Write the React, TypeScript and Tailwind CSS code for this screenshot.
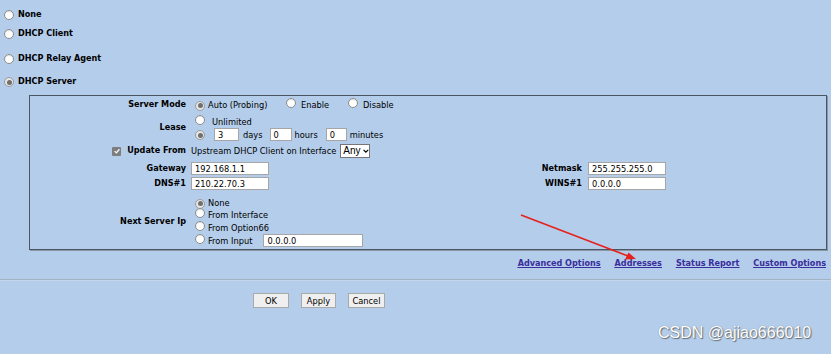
import React from "react";

const FONT = "'DejaVu Sans Condensed', 'DejaVu Sans', sans-serif";

function Radio({ checked = false }: { checked?: boolean }) {
  return (
    <span
      className={
        "inline-flex shrink-0 items-center justify-center w-[10px] h-[10px] rounded-full border " +
        (checked
          ? "border-[#9a9a9a] bg-[#e6e6e6]"
          : "border-[#8c8c8c] bg-white shadow-[inset_0_1px_1px_rgba(0,0,0,0.12)]")
      }
    >
      {checked && <span className="block w-[5px] h-[5px] rounded-full bg-[#6f6f6f]" />}
    </span>
  );
}

function Input({ value, w, h = 13 }: { value: string; w: number; h?: number }) {
  return (
    <span
      className="inline-flex items-center shrink-0 bg-white border border-[#a6a6a6] pl-[3px] text-[9.2px] text-black leading-none"
      style={{ width: w, height: h }}
    >
      {value}
    </span>
  );
}

function Label({ children }: { children: React.ReactNode }) {
  return (
    <div className="w-[156px] shrink-0 flex justify-end items-center font-bold text-[9px] text-black">
      {children}
    </div>
  );
}

function TopOption({ label, checked, mt }: { label: string; checked?: boolean; mt: string }) {
  return (
    <div className={"flex items-center h-[16px] pl-[4px] gap-[4px] " + mt}>
      <Radio checked={checked} />
      <span className="font-bold text-[9px] text-black">{label}</span>
    </div>
  );
}

function Btn({ label, w }: { label: string; w: number }) {
  return (
    <button
      className="h-[15px] bg-[#efefef] border border-[#a9a9a9] text-[9.2px] text-black leading-none flex items-center justify-center"
      style={{ width: w }}
    >
      {label}
    </button>
  );
}

export default function App() {
  return (
    <div
      className="relative w-[831px] h-[354px] bg-[#b4cdea] overflow-hidden text-black"
      style={{ fontFamily: FONT }}
    >
      <div className="pt-[7px]">
        <TopOption label="None" mt="" />
        <TopOption label="DHCP Client" mt="mt-[3px]" />
        <TopOption label="DHCP Relay Agent" mt="mt-[9px]" />
        <TopOption label="DHCP Server" checked mt="mt-[7px]" />
      </div>

      {/* DHCP Server panel */}
      <div className="ml-[29px] mt-[5px] w-[798px] h-[155px] border border-[#4c5562] shadow-[1px_1px_0_#8797a8] flex flex-col">
        {/* Server Mode */}
        <div className="flex h-[14px] mt-[2px]">
          <Label>Server Mode</Label>
          <div className="ml-[5px] flex items-center text-[9.2px]">
            <span className="ml-[4px]"><Radio checked /></span>
            <span className="ml-[3px] w-[78px]">Auto (Probing)</span>
            <span><Radio /></span>
            <span className="ml-[5px] w-[47px]">Enable</span>
            <span><Radio /></span>
            <span className="ml-[5px]">Disable</span>
          </div>
        </div>

        {/* Lease */}
        <div className="flex mt-[3px]">
          <Label>Lease</Label>
          <div className="ml-[5px] flex flex-col text-[9.2px]">
            <div className="flex items-center h-[13px]">
              <span className="ml-[4px]"><Radio /></span>
              <span className="ml-[7px]">Unlimited</span>
            </div>
            <div className="flex items-center h-[13px]">
              <span className="ml-[4px]"><Radio checked /></span>
              <span className="ml-[9px]"><Input value="3" w={25} /></span>
              <span className="ml-[4px]">days</span>
              <span className="ml-[7px]"><Input value="0" w={22} /></span>
              <span className="ml-[3px]">hours</span>
              <span className="ml-[8px]"><Input value="0" w={21} /></span>
              <span className="ml-[3px]">minutes</span>
            </div>
          </div>
        </div>

        {/* Update From */}
        <div className="flex h-[14px] mt-[3px]">
          <Label>
            <span className="inline-flex items-center justify-center w-[9px] h-[9px] rounded-[1px] bg-[#7d7d7d] mr-[6px]">
              <svg viewBox="0 0 10 10" className="w-[8px] h-[8px]">
                <path d="M2 5.2 L4.2 7.3 L8 2.8" fill="none" stroke="white" strokeWidth="1.6" />
              </svg>
            </span>
            Update From
          </Label>
          <div className="ml-[5px] flex items-center text-[9.2px]">
            <span>Upstream DHCP Client on Interface</span>
            <span
              className="ml-[4px] inline-flex items-center h-[14px] w-[30px] bg-white border border-[#767676] pl-[2px] text-[10px] leading-none"
              style={{ fontFamily: "'Liberation Sans', sans-serif" }}
            >
              Any
              <svg viewBox="0 0 10 10" className="ml-[1px] w-[8px] h-[8px]">
                <path d="M2 3.5 L5 6.5 L8 3.5" fill="none" stroke="black" strokeWidth="1.5" />
              </svg>
            </span>
          </div>
        </div>

        {/* Gateway / Netmask */}
        <div className="flex h-[13px] mt-[4px]">
          <Label>Gateway</Label>
          <div className="ml-[5px] w-[305px] flex items-center">
            <Input value="192.168.1.1" w={78} />
          </div>
          <div className="w-[86px] flex justify-end items-center font-bold text-[9px]">Netmask</div>
          <div className="ml-[6px] flex items-center">
            <Input value="255.255.255.0" w={78} />
          </div>
        </div>

        {/* DNS / WINS */}
        <div className="flex h-[13px] mt-[2px]">
          <Label>DNS#1</Label>
          <div className="ml-[5px] w-[305px] flex items-center">
            <Input value="210.22.70.3" w={78} />
          </div>
          <div className="w-[86px] flex justify-end items-center font-bold text-[9px]">WINS#1</div>
          <div className="ml-[6px] flex items-center">
            <Input value="0.0.0.0" w={78} />
          </div>
        </div>

        {/* Next Server Ip */}
        <div className="flex mt-[7px]">
          <Label>Next Server Ip</Label>
          <div className="ml-[5px] flex flex-col text-[9.2px]">
            <div className="flex items-center h-[12px]">
              <span className="ml-[4px]"><Radio checked /></span>
              <span className="ml-[3px]">None</span>
            </div>
            <div className="flex items-center h-[12px]">
              <span className="ml-[4px]"><Radio /></span>
              <span className="ml-[3px]">From Interface</span>
            </div>
            <div className="flex items-center h-[13px]">
              <span className="ml-[4px]"><Radio /></span>
              <span className="ml-[3px]">From Option66</span>
            </div>
            <div className="flex items-center h-[13px]">
              <span className="ml-[4px]"><Radio /></span>
              <span className="ml-[3px]">From Input</span>
              <span className="ml-[11px]"><Input value="0.0.0.0" w={100} /></span>
            </div>
          </div>
        </div>
      </div>

      {/* Links */}
      <div className="flex justify-end items-center h-[12px] mt-[8px] pr-[5px] gap-[14px] font-bold text-[9px] text-[#3a2d9c] underline">
        <a href="#">Advanced Options</a>
        <a href="#">Addresses</a>
        <a href="#">Status Report</a>
        <a href="#">Custom Options</a>
      </div>

      {/* Separator */}
      <div className="mt-[9px] h-[2px] border-t border-[#a3b3c4] border-b border-b-[#c4d6ea]" />

      {/* Buttons */}
      <div className="flex mt-[12px] ml-[253px] gap-[12px]">
        <Btn label="OK" w={36} />
        <Btn label="Apply" w={35} />
        <Btn label="Cancel" w={37} />
      </div>

      {/* Red annotation arrow */}
      <svg className="absolute left-0 top-0 pointer-events-none" width="831" height="354">
        <line x1="521" y1="215" x2="628" y2="256" stroke="#e8201c" strokeWidth="1.6" />
        <polygon points="636,259 625,259.5 628.5,252.5" fill="#e8201c" />
      </svg>

      {/* Watermark */}
      <div
        className="absolute left-[658px] top-[325px] text-[16px] leading-none text-white"
        style={{
          fontFamily: "'Liberation Sans', Arial, sans-serif",
          textShadow: "1px 1px 1px rgba(70,70,70,0.7), 0 0 1px rgba(90,90,90,0.6)",
        }}
      >
        CSDN @ajiao666010
      </div>
    </div>
  );
}
